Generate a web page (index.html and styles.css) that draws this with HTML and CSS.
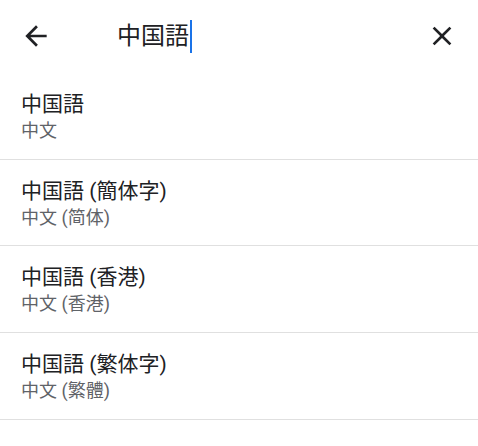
FILE: index.html
```html
<!DOCTYPE html>
<html lang="ja">
<head>
<meta charset="utf-8">
<link rel="stylesheet" href="styles.css">
</head>
<body>
<div class="app">
  <header class="bar">
    <button class="icon-btn" aria-label="戻る">
      <svg viewBox="0 0 24 24" width="32" height="32"><path d="M20 11H7.83l5.59-5.59L12 4l-8 8 8 8 1.41-1.41L7.83 13H20v-2z" fill="#202124"/></svg>
    </button>
    <div class="query"><span class="query-text">中国語</span><span class="caret"></span></div>
    <button class="icon-btn" aria-label="クリア">
      <svg viewBox="0 0 24 24" width="32" height="32"><path d="M19 6.41L17.59 5 12 10.59 6.41 5 5 6.41 10.59 12 5 17.59 6.41 19 12 13.41 17.59 19 19 17.59 13.41 12z" fill="#202124"/></svg>
    </button>
  </header>
  <ul class="list">
    <li class="item"><div class="title">中国語</div><div class="sub">中文</div></li>
    <li class="item"><div class="title">中国語 (簡体字)</div><div class="sub">中文 (简体)</div></li>
    <li class="item"><div class="title">中国語 (香港)</div><div class="sub">中文 (香港)</div></li>
    <li class="item"><div class="title">中国語 (繁体字)</div><div class="sub">中文 (繁體)</div></li>
  </ul>
</div>
</body>
</html>
```
FILE: styles.css
```css
html, body {
  margin: 0;
  padding: 0;
  background: #ffffff;
}
body {
  font-family: Roboto, "Noto Sans CJK JP", sans-serif;
  color: #202124;
}
.app {
  width: 478px;
}
.bar {
  height: 73px;
  display: flex;
  align-items: center;
  padding: 0 20px 1px;
  box-sizing: border-box;
}
.icon-btn {
  width: 32px;
  height: 32px;
  padding: 0;
  border: 0;
  background: none;
  display: flex;
  align-items: center;
  justify-content: center;
}
.query {
  flex: 1;
  display: flex;
  align-items: center;
  padding-left: 65px;
}
.query-text {
  font-size: 24px;
  line-height: 32px;
  color: #202124;
}
.caret {
  width: 2px;
  height: 33px;
  background: #1a73e8;
  margin-left: 1px;
}
.list {
  list-style: none;
  margin: 0;
  padding: 0;
}
.item {
  height: 86.67px;
  box-sizing: border-box;
  padding: 17px 21px 0;
  border-bottom: 1px solid #e0e0e0;
}
.title {
  font-size: 21px;
  line-height: 28px;
  color: #202124;
}
.sub {
  font-size: 18px;
  line-height: 24px;
  color: #5f6368;
  margin-top: 1px;
}
```
